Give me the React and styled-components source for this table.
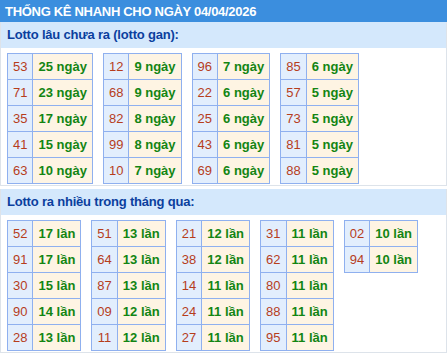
import React from 'react';
import styled, { createGlobalStyle } from 'styled-components';

const GlobalStyle = createGlobalStyle`
  body {
    margin: 0;
    background: #fff;
    font-family: "Liberation Sans", Arial, sans-serif;
  }
`

const Header = styled.div`
  height: 22px;
  line-height: 23px;
  background-color: #3b8ede;
  color: #fff;
  font-size: 13px;
  font-weight: bold;
  letter-spacing: -0.3px;
  padding-left: 5px;
`

const Section = styled.div`
  border: 1px solid #dde3ea;
  border-top: none;
  margin-bottom: 3px;
`

const SectionTitle = styled.div`
  height: 26px;
  line-height: 26px;
  background-color: #d4e8fc;
  color: #0b3f9e;
  font-size: 13px;
  font-weight: bold;
  letter-spacing: -0.2px;
  padding-left: 6px;
`

const Tables = styled.div`
  display: flex;
  flex-wrap: wrap;
  align-items: flex-start;
  gap: 10px;
  padding: 5px 6px 1px;
`

const Table = styled.table`
  border-collapse: collapse;
  font-size: 13px;
`

const Cell = styled.td`
  height: 26px;
  width: ${p => (p.$num ? '25px' : 'auto')};
  padding: 0 5px;
  box-sizing: border-box;
  border: 1px solid #8fb0ef;
  background-color: ${p => (p.$num ? '#e2eefd' : '#fef4e3')};
  color: ${p => (p.$num ? '#b63d1c' : '#138513')};
  font-weight: ${p => (p.$num ? 'normal' : 'bold')};
  text-align: center;
  white-space: nowrap;
`

const GAN = [
  [['53', 25], ['71', 23], ['35', 17], ['41', 15], ['63', 10]],
  [['12', 9], ['68', 9], ['82', 8], ['99', 8], ['10', 7]],
  [['96', 7], ['22', 6], ['25', 6], ['43', 6], ['69', 6]],
  [['85', 6], ['57', 5], ['73', 5], ['81', 5], ['88', 5]],
];

const NHIEU = [
  [['52', 17], ['91', 17], ['30', 15], ['90', 14], ['28', 13]],
  [['51', 13], ['64', 13], ['87', 13], ['09', 12], ['11', 12]],
  [['21', 12], ['38', 12], ['14', 11], ['24', 11], ['27', 11]],
  [['31', 11], ['62', 11], ['80', 11], ['88', 11], ['95', 11]],
  [['02', 10], ['94', 10]],
];

const StatTable = ({ rows, unit }) => (
  <Table>
    <tbody>
      {rows.map(([num, count], i) => (
        <tr key={i}>
          <Cell $num>{num}</Cell>
          <Cell>{count} {unit}</Cell>
        </tr>
      ))}
    </tbody>
  </Table>
);

const App = () => (
  <>
    <GlobalStyle />
    <Header>THỐNG KÊ NHANH CHO NGÀY 04/04/2026</Header>
    <Section>
      <SectionTitle>Lotto lâu chưa ra (lotto gan):</SectionTitle>
      <Tables>
        {GAN.map((rows, i) => <StatTable key={i} rows={rows} unit="ngày" />)}
      </Tables>
    </Section>
    <Section>
      <SectionTitle>Lotto ra nhiều trong tháng qua:</SectionTitle>
      <Tables>
        {NHIEU.map((rows, i) => <StatTable key={i} rows={rows} unit="lần" />)}
      </Tables>
    </Section>
  </>
);

export default App;
